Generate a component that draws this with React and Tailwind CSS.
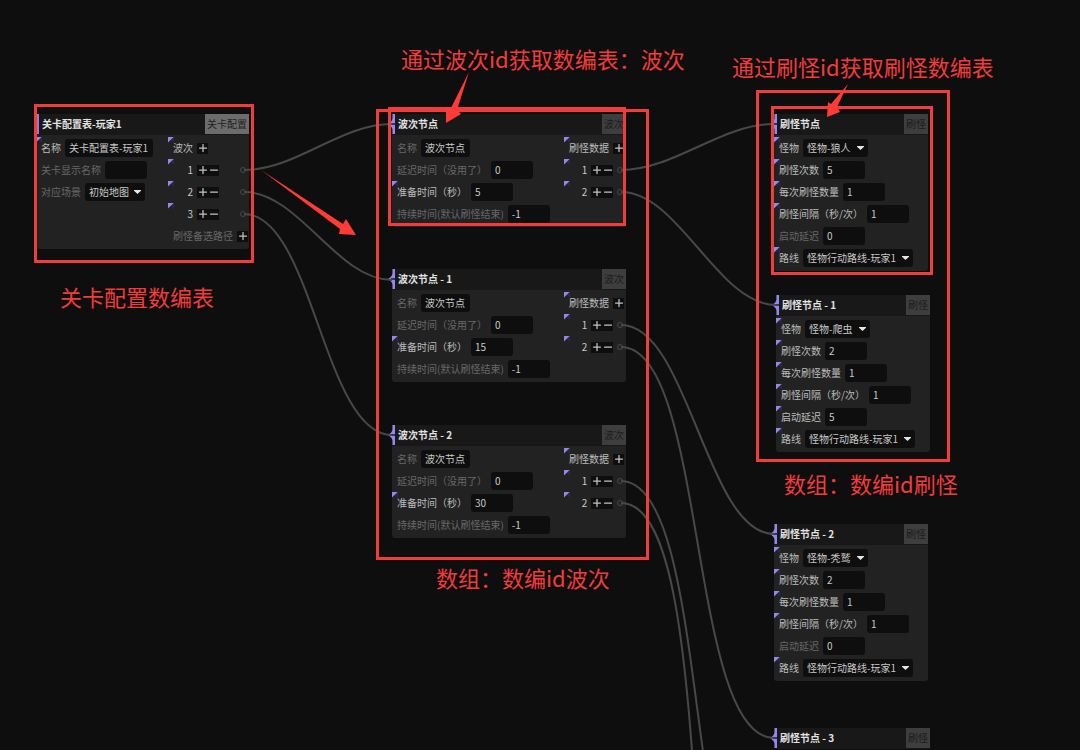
import React, { useId } from 'react'
import { Plus, Minus } from 'lucide-react'

const waveFields = (prepare) => [
  { label: '名称', value: '波次节点', dim: true, width: 'w-[49px]' },
  { label: '延迟时间（没用了）', value: '0', dim: true },
  { label: '准备时间（秒）', value: prepare },
  { label: '持续时间(默认刷怪结束)', value: '-1', dim: true },
]

const waveOutputs = [{ label: '刷怪数据', items: ['1', '2'] }]

const spawnFields = (monster, count, delay) => [
  { label: '怪物', value: monster, select: true, width: 'w-[65px]' },
  { label: '刷怪次数', value: count },
  { label: '每次刷怪数量', value: '1' },
  { label: '刷怪间隔（秒/次）', value: '1' },
  { label: '启动延迟', value: delay, dim: delay === '0' },
  { label: '路线', value: '怪物行动路线-玩家1', select: true, width: 'w-[110px]' },
]

const nodes = [
  {
    title: '关卡配置表-玩家1',
    tag: '关卡配置',
    root: true,
    place: 'left-[36px] top-[114px] w-[213px]',
    fields: [
      { label: '名称', value: '关卡配置表-玩家1', width: 'w-[88px]' },
      { label: '关卡显示名称', value: '', dim: true },
      { label: '对应场景', value: '初始地图', select: true, dim: true, width: 'w-[60px]' },
    ],
    outputs: [
      { label: '波次', items: ['1', '2', '3'] },
      { label: '刷怪备选路径', items: [], dim: true },
    ],
    outputWidth: 'w-[81px]',
  },
  {
    title: '波次节点',
    tag: '波次',
    place: 'left-[392px] top-[114px] w-[234px]',
    fields: waveFields('5'),
    outputs: waveOutputs,
  },
  {
    title: '波次节点 - 1',
    tag: '波次',
    place: 'left-[392px] top-[269px] w-[234px]',
    fields: waveFields('15'),
    outputs: waveOutputs,
  },
  {
    title: '波次节点 - 2',
    tag: '波次',
    place: 'left-[392px] top-[425px] w-[234px]',
    fields: waveFields('30'),
    outputs: waveOutputs,
  },
  {
    title: '刷怪节点',
    tag: '刷怪',
    place: 'left-[774px] top-[114px] w-[154px]',
    fields: spawnFields('怪物-狼人', '5', '0'),
  },
  {
    title: '刷怪节点 - 1',
    tag: '刷怪',
    place: 'left-[776px] top-[295px] w-[154px]',
    fields: spawnFields('怪物-爬虫', '2', '5'),
  },
  {
    title: '刷怪节点 - 2',
    tag: '刷怪',
    place: 'left-[774px] top-[524px] w-[154px]',
    fields: spawnFields('怪物-秃鹫', '2', '0'),
  },
  {
    title: '刷怪节点 - 3',
    tag: '刷怪',
    place: 'left-[774px] top-[728px] w-[156px]',
    fields: [],
  },
]

// [x1, y1, x2, y2]
const wires = [
  [244, 170, 392, 124],
  [244, 192, 392, 280],
  [244, 214, 392, 435],
  [621, 170, 774, 124],
  [621, 192, 776, 305],
  [621, 325, 774, 534],
  [621, 347, 774, 738],
  [621, 481, 774, 940],
  [621, 503, 774, 1150],
]

const frames = [
  'left-[34px] top-[104px] w-[220px] h-[159px]',
  'left-[376px] top-[109px] w-[273px] h-[451px]',
  'left-[388px] top-[107px] w-[238px] h-[119px]',
  'left-[756px] top-[90px] w-[194px] h-[372px]',
  'left-[771px] top-[106px] w-[162px] h-[169px]',
]

const notes = [
  { text: '通过波次id获取数编表：波次', place: 'left-[401px] top-[42px]' },
  { text: '通过刷怪id获取刷怪数编表', place: 'left-[732px] top-[50px]' },
  { text: '关卡配置数编表', place: 'left-[60px] top-[280px]' },
  { text: '数组：数编id波次', place: 'left-[436px] top-[561px]' },
  { text: '数组：数编id刷怪', place: 'left-[784px] top-[467px]' },
]

const arrows = [
  '469,72 451,108 446,107 446,123 461,114 457,110',
  '848,84 831,104 828,102 827,117 840,112 837,107',
  '261,170 340,229 339,234 356,235 346,219 343,224',
]

// Longer wires bend further out of their ports
function wirePath([x1, y1, x2, y2]) {
  const bend = 4.2 * Math.sqrt(Math.hypot(x2 - x1, y2 - y1))
  return `M${x1} ${y1}C${x1 + bend} ${y1} ${x2 - bend} ${y2} ${x2} ${y2}`
}

function Marker() {
  return (
    <svg className="absolute left-0 -top-0.5 w-[6px] h-[6px]" viewBox="0 0 6 6" aria-hidden="true">
      <path d="M0 0H6V6Z" fill="#2c2842" />
      <path d="M0 0H5.6L0 5.6Z" fill="#9488ee" />
    </svg>
  )
}

function Field({ label, value, select, dim, width = 'w-[42px]' }) {
  const id = useId()
  const control = `${width} h-[18px] px-1 rounded-[3px] bg-[#0e0e0e] text-[#c9c9c9] outline-none`

  return (
    <div className="relative flex items-center gap-1 pl-[5px] h-[18px]">
      {!dim && <Marker />}
      <label htmlFor={id} className={dim ? 'text-[#686868]' : 'text-[#bcbcbc]'}>
        {label}
      </label>
      {select ? (
        <div className="grid items-center">
          <select id={id} className={`${control} appearance-none col-start-1 row-start-1`}>
            <option>{value}</option>
          </select>
          <svg
            className="col-start-1 row-start-1 justify-self-end mr-1 w-[7px] h-[4px] pointer-events-none"
            viewBox="0 0 7 4"
            aria-hidden="true"
          >
            <path d="M0 0H7V0.8L3.5 4L0 0.8Z" fill="#e6e6e6" />
          </svg>
        </div>
      ) : (
        <input id={id} type="text" defaultValue={value} className={control} />
      )}
    </div>
  )
}

function IconButton({ icon: Icon, label }) {
  return (
    <button type="button" aria-label={label} className="flex items-center justify-center w-[11px] h-[11px] bg-[#0e0e0e] text-[#c4c4c4]">
      <Icon className="shrink-0 w-3 h-3" strokeWidth={2.5} />
    </button>
  )
}

function OutputGroup({ label, items, dim }) {
  return (
    <>
      <div className="relative flex items-center gap-1 pl-[5px] h-[18px]">
        {!dim && <Marker />}
        <span className={dim ? 'text-[#686868]' : 'text-[#bcbcbc]'}>{label}</span>
        <IconButton icon={Plus} label={`添加${label}`} />
      </div>
      {items.map((item) => (
        <div key={item} className="relative flex items-center gap-1 pl-[5px] pr-[3px] h-[18px]">
          <Marker />
          <span className="w-5 text-right text-[#c9c9c9]">{item}</span>
          <div className="flex">
            <IconButton icon={Plus} label={`插入 ${item}`} />
            <IconButton icon={Minus} label={`删除 ${item}`} />
          </div>
          <span className="ml-auto w-[6px] h-[6px] rounded-full border border-[#484848]" />
        </div>
      ))}
    </>
  )
}

function GraphNode({ title, tag, root, place, fields, outputs, outputWidth = 'w-[62px]' }) {
  return (
    <section className={`absolute ${place} rounded-b-[3px] bg-[#222222] text-[10px] leading-[18px]`}>
      <header className="relative flex items-start justify-between h-[21px] pl-[6px] bg-[#181818]">
        {root ? (
          <span className="absolute left-0 top-0 w-[3px] h-5 bg-[#9a78d8]" />
        ) : (
          <svg className="absolute -left-1 top-0 w-[7px] h-5" viewBox="0 0 7 20" aria-hidden="true">
            <path d="M4.5 0H7V20H4.5V15.5C4 13 2.5 11.5 0 10C2.5 8.5 4 7 4.5 4.5Z" fill="#9488ee" />
            <path d="M3 9H7V11H3Z" fill="#3a3658" />
          </svg>
        )}
        <h2 className="leading-[19px] font-bold text-[#e2e2e2]">{title}</h2>
        <span
          className={`h-5 px-0.5 leading-[19px] ${
            root ? 'bg-[#6c6c6c] text-[#1f1f1f]' : 'bg-[#3e3e3e] text-[#1c1c1c]'
          }`}
        >
          {tag}
        </span>
      </header>
      {fields.length > 0 && (
        <div className="flex justify-between py-1">
          <div className="flex flex-col gap-1">
            {fields.map((field) => (
              <Field key={field.label} {...field} />
            ))}
          </div>
          {outputs && (
            <div className={`flex flex-col gap-1 ${outputWidth}`}>
              {outputs.map((group) => (
                <OutputGroup key={group.label} {...group} />
              ))}
            </div>
          )}
        </div>
      )}
    </section>
  )
}

export default function App() {
  return (
    <main className="relative h-screen overflow-hidden bg-[#0e0e0e] whitespace-nowrap font-['Noto_Sans_CJK_SC',sans-serif]">
      {nodes.map((node) => (
        <GraphNode key={node.title} {...node} />
      ))}

      {/* Connections */}
      <svg className="absolute inset-0 size-full pointer-events-none" aria-hidden="true">
        {wires.map((wire) => (
          <path key={wire.join()} d={wirePath(wire)} fill="none" stroke="#484848" strokeWidth="2" />
        ))}
      </svg>

      {/* Annotations */}
      {frames.map((frame) => (
        <div key={frame} className={`absolute ${frame} border-[3px] border-[#f03c3a] pointer-events-none`} />
      ))}
      {notes.map(({ text, place }) => (
        <p key={text} className={`absolute ${place} text-[22px] leading-8 text-[#f03c3a]`}>
          {text}
        </p>
      ))}
      <svg className="absolute inset-0 size-full pointer-events-none" aria-hidden="true">
        {arrows.map((points) => (
          <polygon key={points} points={points} fill="#ff3b38" />
        ))}
      </svg>
    </main>
  )
}
